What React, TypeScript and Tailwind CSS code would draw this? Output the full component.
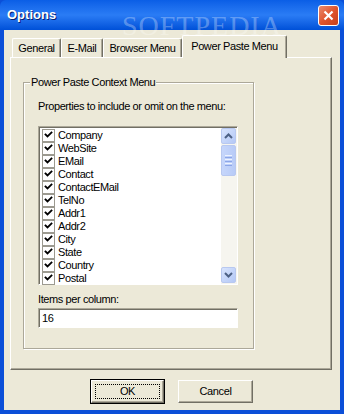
import React from "react";

const items = [
  "Company",
  "WebSite",
  "EMail",
  "Contact",
  "ContactEMail",
  "TelNo",
  "Addr1",
  "Addr2",
  "City",
  "State",
  "Country",
  "Postal",
];

const tabs = [
  { label: "General", w: "w-[49px]" },
  { label: "E-Mail", w: "w-[42px]" },
  { label: "Browser Menu", w: "w-[79px]" },
];

const Check = () => (
  <div className="w-[13px] h-[13px] shrink-0 border border-[#9c9a90] bg-white flex items-center justify-center">
    <svg width="9" height="9" viewBox="0 0 9 9">
      <path d="M1.5 3.5 L3.5 5.5 L7.5 1.5" stroke="#000" strokeWidth="1.8" fill="none" strokeLinecap="square" />
    </svg>
  </div>
);

const ScrollArrow = ({ up }: { up?: boolean }) => (
  <div className="w-[15px] h-[16px] rounded-[2px] border border-[#b8c8f0] bg-gradient-to-br from-[#d8e4fd] to-[#b4c8f6] flex items-center justify-center">
    <svg width="9" height="6" viewBox="0 0 9 6">
      <path
        d={up ? "M1 5 L4.5 1.5 L8 5" : "M1 1 L4.5 4.5 L8 1"}
        stroke="#4d6185"
        strokeWidth="2"
        fill="none"
      />
    </svg>
  </div>
);

const WinButton = ({ label, isDefault }: { label: string; isDefault?: boolean }) =>
  isDefault ? (
    <div className="w-[75px] h-[25px] border border-black">
      <div className="w-full h-full border-t border-l border-white border-r border-b border-r-[#716f64] border-b-[#716f64] shadow-[inset_-1px_-1px_0_#aca899] bg-[#ece9d8] p-[3px]">
        <div className="w-full h-full border border-dotted border-black flex items-center justify-center">
          {label}
        </div>
      </div>
    </div>
  ) : (
    <div className="w-[75px] h-[23px] border-t border-l border-white border-r border-b border-r-[#716f64] border-b-[#716f64] shadow-[inset_-1px_-1px_0_#aca899] bg-[#ece9d8] flex items-center justify-center">
      {label}
    </div>
  );

export default function App() {
  return (
    <div
      className="relative w-[344px] h-[414px] flex flex-col bg-[#0b4fd8] text-[11px] tracking-[-0.4px] text-black overflow-hidden"
      style={{ fontFamily: '"Liberation Sans", Arial, sans-serif' }}
    >
      {/* title bar */}
      <div className="h-[30px] shrink-0 flex items-center justify-between pl-[7px] pr-[5px] bg-gradient-to-b from-[#0a5ee6] via-[#2a7cf5] to-[#0050d8] rounded-t-[6px]">
        <span className="text-white font-bold text-[13px] tracking-normal [text-shadow:1px_1px_0_#0a1e6e]">Options</span>
        <div className="w-[21px] h-[21px] rounded-[3px] border border-white bg-gradient-to-br from-[#e88a6c] via-[#e0552d] to-[#c6401c] flex items-center justify-center">
          <svg width="11" height="11" viewBox="0 0 11 11">
            <path d="M1.5 1.5 L9.5 9.5 M9.5 1.5 L1.5 9.5" stroke="#fff" strokeWidth="2.2" />
          </svg>
        </div>
      </div>

      {/* body */}
      <div className="flex-1 mx-[4px] mb-[4px] bg-[#ece9d8] flex flex-col pl-[6px] pt-[5px]">
        {/* tabs */}
        <div className="flex items-end pl-[2px] h-[22px]">
          {tabs.map((t) => (
            <div
              key={t.label}
              className={`${t.w} h-[19px] rounded-t-[2px] border-t border-l border-white border-r border-r-[#716f64] shadow-[inset_-1px_0_0_#aca899] flex items-center justify-center`}
            >
              {t.label}
            </div>
          ))}
          <div className="relative z-10 w-[105px] h-[23px] -mb-[1px] rounded-t-[2px] border-t border-l border-white border-r border-r-[#716f64] shadow-[inset_-1px_0_0_#aca899] bg-[#ece9d8] flex items-center justify-center pb-[2px]">
            Power Paste Menu
          </div>
        </div>

        {/* tab panel */}
        <div className="w-[322px] h-[313px] border-t border-l border-white border-r border-b border-r-[#716f64] border-b-[#716f64] shadow-[inset_-1px_-1px_0_#aca899] pl-[12px] pt-[24px]">
          {/* group box */}
          <div className="relative w-[231px] h-[267px] border border-[#aca899] shadow-[inset_1px_1px_0_#fff,1px_1px_0_#fff] pl-[14px] pt-[16px]">
            <span className="absolute -top-[8px] left-[6px] bg-[#ece9d8] px-[1px] leading-[14px]">
              Power Paste Context Menu
            </span>
            <div className="leading-[14px]">Properties to include or omit on the menu:</div>

            {/* list box */}
            <div className="mt-[13px] w-[200px] h-[159px] border-t border-l border-[#aca899] border-r border-b border-r-white border-b-white shadow-[inset_1px_1px_0_#716f64] bg-white flex pl-[3px] pt-[1px]">
              <div className="flex-1 flex flex-col pt-[1px]">
                {items.map((it) => (
                  <div key={it} className="h-[13px] flex items-center gap-[3px]">
                    <Check />
                    <span className="leading-[13px]">{it}</span>
                  </div>
                ))}
              </div>
              <div className="w-[16px] flex flex-col bg-[#f6f5ef] pb-[1px]">
                <ScrollArrow up />
                <div className="mt-[1px] w-[15px] h-[31px] rounded-[2px] border border-[#b8c8f0] bg-gradient-to-r from-[#c6d6fb] to-[#b8cbf7] flex flex-col items-center justify-center gap-[1px]">
                  <div className="w-[7px] h-[1px] bg-[#eef3ff]" />
                  <div className="w-[7px] h-[1px] bg-[#8ca6e8]" />
                  <div className="w-[7px] h-[1px] bg-[#eef3ff]" />
                  <div className="w-[7px] h-[1px] bg-[#8ca6e8]" />
                  <div className="w-[7px] h-[1px] bg-[#eef3ff]" />
                  <div className="w-[7px] h-[1px] bg-[#8ca6e8]" />
                </div>
                <div className="flex-1" />
                <ScrollArrow />
              </div>
            </div>

            <div className="mt-[7px] leading-[14px]">Items per column:</div>
            <div className="mt-[2px] w-[200px] h-[20px] border-t border-l border-[#aca899] border-r border-b border-r-white border-b-white shadow-[inset_1px_1px_0_#716f64] bg-white flex items-center pl-[3px]">
              16
            </div>
          </div>
        </div>

        {/* buttons */}
        <div className="flex items-center gap-[13px] pl-[80px] mt-[9px]">
          <WinButton label="OK" isDefault />
          <WinButton label="Cancel" />
        </div>
      </div>

      {/* watermark */}
      <div
        className="absolute left-[122px] top-[12px] text-white/30 text-[28px] leading-[28px] tracking-[1px] pointer-events-none"
        style={{ fontFamily: '"Liberation Serif", serif' }}
      >
        SOFTPEDIA
      </div>
    </div>
  );
}
